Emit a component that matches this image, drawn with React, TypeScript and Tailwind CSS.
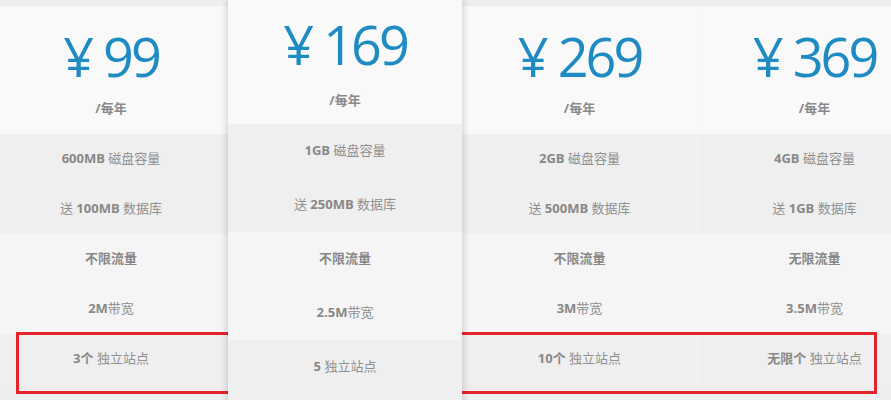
type Plan = {
  price: string;
  rows: [React.ReactNode, React.ReactNode, React.ReactNode, React.ReactNode, React.ReactNode];
};

const plans: Plan[] = [
  {
    price: "99",
    rows: [
      <><b>600MB</b> 磁盘容量</>,
      <>送 <b>100MB</b> 数据库</>,
      <b>不限流量</b>,
      <><b>2M</b>带宽</>,
      <><b>3个</b> 独立站点</>,
    ],
  },
  {
    price: "169",
    rows: [
      <><b>1GB</b> 磁盘容量</>,
      <>送 <b>250MB</b> 数据库</>,
      <b>不限流量</b>,
      <><b>2.5M</b>带宽</>,
      <><b>5</b> 独立站点</>,
    ],
  },
  {
    price: "269",
    rows: [
      <><b>2GB</b> 磁盘容量</>,
      <>送 <b>500MB</b> 数据库</>,
      <b>不限流量</b>,
      <><b>3M</b>带宽</>,
      <><b>10个</b> 独立站点</>,
    ],
  },
  {
    price: "369",
    rows: [
      <><b>4GB</b> 磁盘容量</>,
      <>送 <b>1GB</b> 数据库</>,
      <b>无限流量</b>,
      <><b>3.5M</b>带宽</>,
      <><b>无限个</b> 独立站点</>,
    ],
  },
];

const bands = ["bg-[#efefef]", "bg-[#efefef]", "bg-[#f5f5f5]", "bg-[#f5f5f5]", "bg-[#efefef]"];

function Price({ value }: { value: string }) {
  return (
    <div className="flex items-start text-[#1f8bc3] text-[54px] font-medium leading-none tracking-[-3px] [font-family:'Open_Sans',sans-serif]">
      <span className="mr-[12px]">¥</span>
      <span>{value}</span>
    </div>
  );
}

function Column({ plan, featured, className }: { plan: Plan; featured?: boolean; className?: string }) {
  return (
    <div
      className={
        "shrink-0 flex flex-col " +
        (featured ? "relative z-10 w-[234px] shadow-[0_0_8px_rgba(0,0,0,0.22)]" : "w-[234px] mt-[6px]") +
        (className ? " " + className : "")
      }
    >
      <div
        className={
          "bg-[#f9f9f9] flex flex-col items-center " +
          (featured ? "h-[124px] pt-[17px]" : "h-[128px] pt-[23px]")
        }
      >
        <Price value={plan.price} />
        <div className={"text-[13px] font-bold text-[#8a8a8a] " + (featured ? "mt-[20px]" : "mt-[16px]")}>/每年</div>
      </div>
      {plan.rows.map((r, i) => (
        <div
          key={i}
          className={
            bands[i] +
            " flex items-center justify-center text-[13px] text-[#8f8f8f] [&_b]:text-[#888] [&_b]:font-bold " +
            (featured ? "h-[54px]" : "h-[50px]")
          }
        >
          <span>{r}</span>
        </div>
      ))}
      {featured && <div className="h-[20px] bg-[#efefef]" />}
    </div>
  );
}

export default function App() {
  return (
    <div className="relative w-[891px] h-[400px] overflow-hidden bg-[#eeeeee] [font-family:'Open_Sans','Noto_Sans_CJK_SC',sans-serif]">
      <div className="flex items-start">
        <Column plan={plans[0]} className="-ml-[6px]" />
        <Column plan={plans[1]} featured />
        <Column plan={plans[2]} className="w-[235px]" />
        <Column plan={plans[3]} className="border-l border-[#f8f8f8]" />
      </div>
      <div className="absolute left-[16px] top-[332px] w-[861px] h-[62px] border-[3px] border-[#e5232b]" />
    </div>
  );
}
